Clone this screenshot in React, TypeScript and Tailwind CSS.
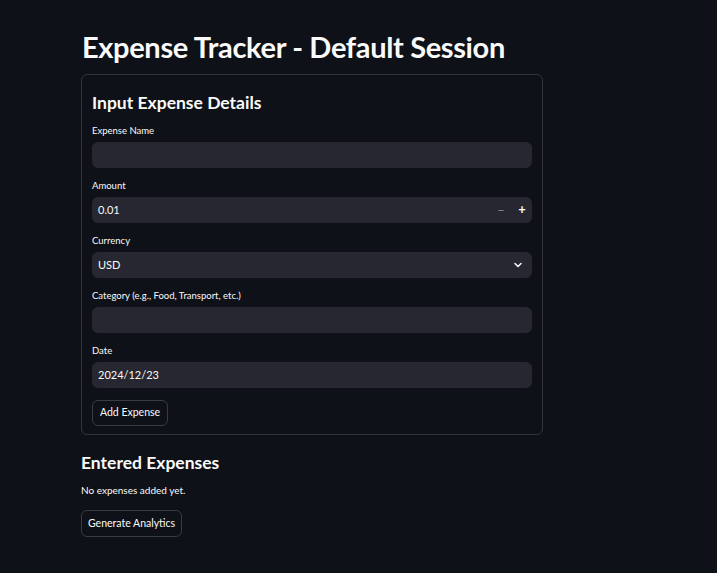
import React from 'react';

const font = { fontFamily: 'Lato, "Noto Sans", sans-serif' };

const Label: React.FC<{ text: string }> = ({ text }) => (
  <div className="h-[11px] text-[9.5px] leading-[11px] text-[#fafafa] mb-[6px]">{text}</div>
);

const Field: React.FC<{ label: string; last?: boolean; children?: React.ReactNode }> = ({ label, last, children }) => (
  <div className={last ? 'flex flex-col mb-[10px]' : 'flex flex-col mb-[12px]'}>
    <Label text={label} />
    <div className="h-[26px] bg-[#262730] rounded-[6px] flex items-center px-[6px] text-[11px] text-[#fafafa]">
      {children}
    </div>
  </div>
);

export default function App() {
  return (
    <div className="min-h-screen w-full bg-[#0e1117] text-[#fafafa]" style={font}>
      <div className="w-[462px] ml-[81px] pt-[30px]">
        <h1 className="text-[29px] leading-[34px] font-bold tracking-[-0.35px] mb-[10px] pl-[1px] whitespace-nowrap">
          Expense Tracker - Default Session
        </h1>

        <div className="border border-[#33353d] rounded-[6px] px-[10px] pt-[16px] pb-[8px]">
          <h2 className="text-[17.5px] leading-[24px] font-bold mb-[10px]">Input Expense Details</h2>

          <Field label="Expense Name" />
          <Field label="Amount">
            <span className="flex-1">0.01</span>
            <span className="w-[22px] flex justify-center text-[#8b8d94] text-[12px]">−</span>
            <span className="w-[20px] mr-[-6px] flex justify-center text-[#fafafa] text-[13px] font-bold">+</span>
          </Field>
          <Field label="Currency">
            <span className="flex-1">USD</span>
            <svg width="12" height="12" viewBox="0 0 24 24" fill="none" stroke="#fafafa" strokeWidth="3" strokeLinecap="round" strokeLinejoin="round" className="mr-[2px]">
              <path d="M6 9l6 6 6-6" />
            </svg>
          </Field>
          <Field label="Category (e.g., Food, Transport, etc.)" />
          <Field label="Date" last>
            2024/12/23
          </Field>

          <button className="h-[26px] px-[7px] border border-[#3a3c44] rounded-[6px] bg-[#0e1117] text-[10.5px] text-[#fafafa]">
            Add Expense
          </button>
        </div>

        <h2 className="text-[17.5px] leading-[24px] font-bold mt-[16px] mb-[8px]">Entered Expenses</h2>
        <p className="text-[10px] leading-[14px] mb-[12px]">No expenses added yet.</p>
        <button className="h-[27px] px-[6px] border border-[#3a3c44] rounded-[6px] bg-[#0e1117] text-[10.5px] text-[#fafafa]">
          Generate Analytics
        </button>
      </div>
    </div>
  );
}
